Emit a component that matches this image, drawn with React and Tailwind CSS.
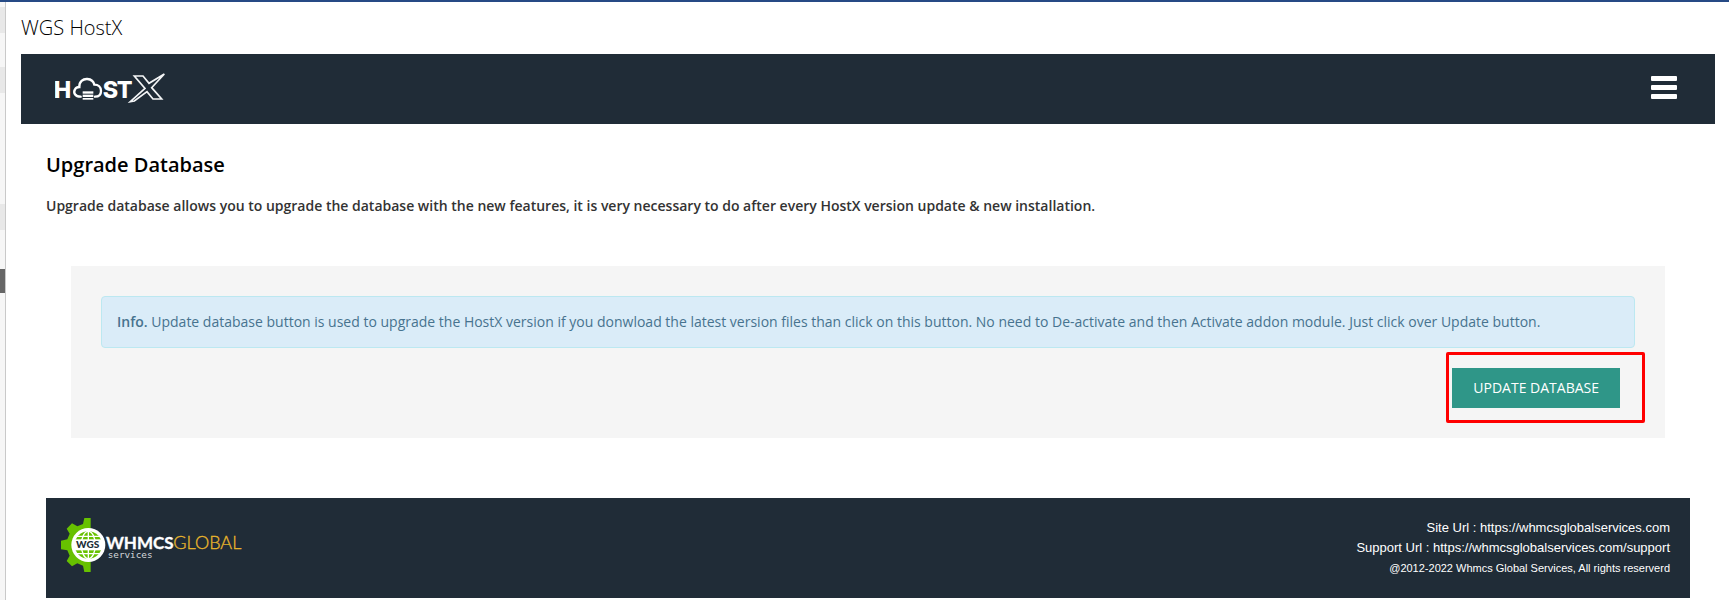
import React from "react";

const HostXLogo = () => (
  <svg width="112" height="32" viewBox="0 0 336 96" role="img" aria-label="HostX">
    <g fill="#fff" fontFamily="Inter, sans-serif" fontWeight="800" fontSize="70">
      <text x="-4" y="74">H</text>
      <text x="143" y="74">S</text>
      <text x="185" y="74">T</text>
    </g>
    <g fill="none" stroke="#fff" strokeWidth="7" strokeLinecap="round">
      <path d="M77 71 C60 71 54 59 60 49 C63 43 69 42 73 42 C72 26 84 17 97 18 C109 19 116 26 118 35 C130 35 138 43 138 54 C138 65 131 71 120 71" />
    </g>
    <g fill="#fff">
      <rect x="83" y="55" width="32" height="7" />
      <rect x="83" y="65" width="32" height="7" />
      <rect x="83" y="75" width="32" height="5" />
    </g>
    <g fill="none" stroke="#f3f5f6" strokeWidth="5" strokeLinejoin="miter">
      <path d="M226 86 L270 46 L238 9 H264 L282 31 L328 3 L290 44 L320 78 H294 L276 56 L238 84 Z" />
    </g>
  </svg>
);

const WgsLogo = () => (
  <svg width="182" height="56" viewBox="0 4 546 168" role="img" aria-label="WHMCS Global Services">
    <path
      fill="#67c100"
      d="M73 4 H92 V166 H73 L69 147 L52 140 L36 149 L20 133 L29 117 L22 101 L3 98 V72 L22 68 L29 51 L20 36 L36 20 L52 29 L69 22 Z"
    />
    <circle cx="85" cy="85" r="51" fill="#fff" />
    <circle cx="85" cy="85" r="41" fill="#67c100" />
    <g fill="none" stroke="#fff" strokeWidth="4">
      <ellipse cx="85" cy="85" rx="21" ry="41" />
      <path d="M85 44 V126 M50 59 H120 M50 111 H120" />
    </g>
    <rect x="40" y="68" width="90" height="33" fill="#fff" />
    <g fontFamily="Lato, sans-serif">
      <text x="83" y="94" textAnchor="middle" fontSize="30" fontWeight="900" fill="#202c37">
        WGS
      </text>
      <text x="138" y="97" fontSize="51" fontWeight="700" fill="#fff" stroke="#fff" strokeWidth="1">
        WHMCS
      </text>
      <text x="340" y="97" fontSize="54" fontWeight="300" fill="#e8b62c" stroke="#e8b62c" strokeWidth="1">
        GLOBAL
      </text>
    </g>
    <text x="143" y="123" fontFamily="DejaVu Sans Mono, monospace" fontSize="28" fill="#d5d9dc">
      services
    </text>
  </svg>
);

const Sidebar = () => (
  <aside className="w-[6px] shrink-0 border-r border-[#c9c9c9] bg-[#f6f6f6] pt-[5px]">
    <div className="h-[26px] bg-[#e8e8e8]"></div>
    <div className="mt-[34px] h-[26px] bg-[#e8e8e8]"></div>
    <div className="mt-[111px] h-[26px] bg-[#e8e8e8]"></div>
    <div className="mt-[39px] h-6 bg-[#666666]"></div>
  </aside>
);

const App = () => {
  return (
    <div className="flex min-h-screen flex-col border-t-2 border-[#264a85] bg-white font-['Open_Sans',sans-serif] text-sm text-[#333333]">
      <div className="flex flex-1">
        <Sidebar />
        <main className="min-w-0 flex-1 pr-[14px] pl-[15px]">
          <h1 className="py-3 text-xl leading-7 font-light text-black">
            WGS HostX
          </h1>

          <header className="flex h-[70px] items-center justify-between bg-[#202c37] pr-[38px] pl-[34px]">
            <a href="#">
              <HostXLogo />
            </a>
            <button type="button" aria-label="Menu">
              <svg width="26" height="26" viewBox="0 0 26 26" fill="#fff">
                <rect y="0" width="26" height="5" rx="1" />
                <rect y="9" width="26" height="5" rx="1" />
                <rect y="18" width="26" height="5" rx="1" />
              </svg>
            </button>
          </header>

          <div className="px-[25px] pt-[27px]">
            <h2 className="text-xl leading-7 font-semibold text-black">
              Upgrade Database
            </h2>
            <p className="mt-[17px] leading-5 font-semibold">
              Upgrade database allows you to upgrade the database with the new
              features, it is very necessary to do after every HostX version
              update &amp; new installation.
            </p>

            <section className="mx-[25px] mt-[50px] bg-[#f5f5f5] p-[30px]">
              <div className="rounded border border-[#bce8f1] bg-[#daecf8] p-[15px] leading-5 text-[#47738f]">
                <strong className="font-semibold">Info.</strong> Update database
                button is used to upgrade the HostX version if you donwload the
                latest version files than click on this button. No need to
                De-activate and then Activate addon module. Just click over
                Update button.
              </div>
              <div className="mt-5 flex justify-end pr-[15px]">
                <div className="relative">
                  <button
                    type="button"
                    className="block h-10 bg-[#2f9688] px-[21px] text-white"
                  >
                    UPDATE DATABASE
                  </button>
                  <div className="pointer-events-none absolute -top-4 -right-[25px] -bottom-[15px] -left-[6px] rounded-xs border-3 border-[#ff0000]"></div>
                </div>
              </div>
            </section>

            <footer className="mt-[60px] flex h-[100px] items-start justify-between bg-[#202c37] pt-5 pr-5 pl-[14px] text-white">
              <a href="#">
                <WgsLogo />
              </a>
              <div className="text-right font-['Liberation_Sans',sans-serif] text-[13px] leading-5">
                <p>
                  Site Url :{" "}
                  <a href="https://whmcsglobalservices.com">
                    https://whmcsglobalservices.com
                  </a>
                </p>
                <p>
                  Support Url :{" "}
                  <a href="https://whmcsglobalservices.com/support">
                    https://whmcsglobalservices.com/support
                  </a>
                </p>
                <p className="text-[11px] leading-5">
                  @2012-2022 Whmcs Global Services, All rights reserverd
                </p>
              </div>
            </footer>
          </div>
        </main>
      </div>
    </div>
  );
};

export default App;
